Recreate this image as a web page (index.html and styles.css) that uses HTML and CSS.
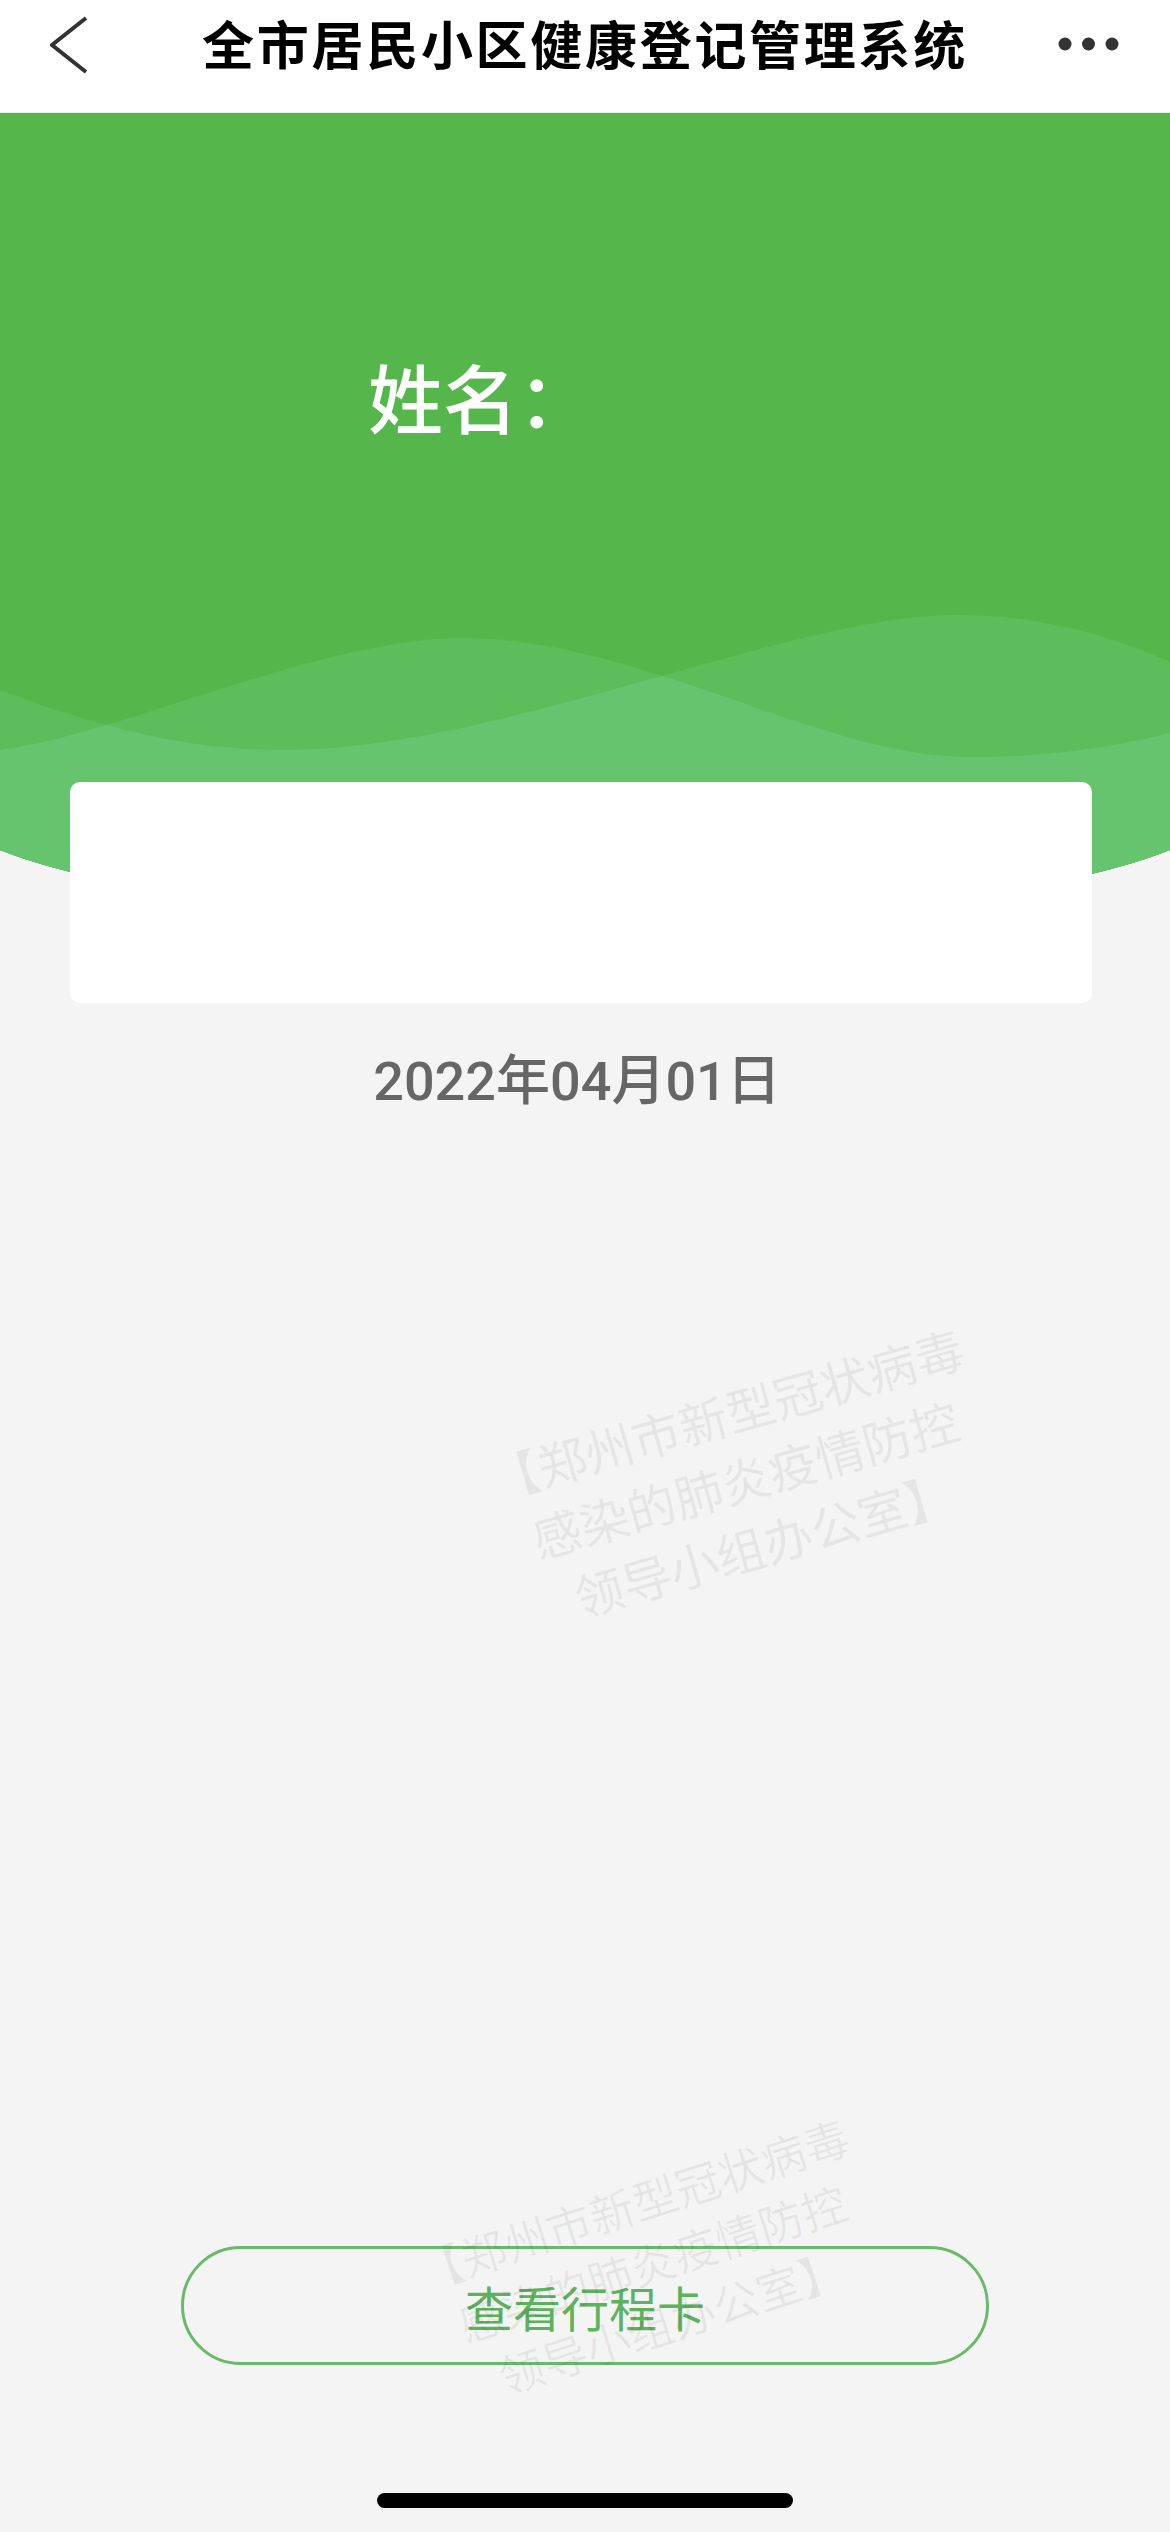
FILE: index.html
```html
<!DOCTYPE html>
<html lang="zh-CN">
<head>
<meta charset="utf-8">
<title>全市居民小区健康登记管理系统</title>
<link rel="stylesheet" href="styles.css">
</head>
<body>
<header class="topbar">
  <svg class="back" viewBox="0 0 40 60" width="40" height="60"><polyline points="36,3 2,30 36,57" fill="none" stroke="#333" stroke-width="4" stroke-linejoin="miter"/></svg>
  <h1 class="title">全市居民小区健康登记管理系统</h1>
  <svg class="more" viewBox="0 0 64 16" width="64" height="16"><circle cx="7" cy="8" r="6.5" fill="#333"/><circle cx="30.5" cy="8" r="6.5" fill="#333"/><circle cx="54" cy="8" r="6.5" fill="#333"/></svg>
</header>
<main class="hero">
  <svg class="waves" viewBox="0 113 1170 808" width="1170" height="808">
    <defs>
      <clipPath id="hero-clip"><path d="M0 113H1170V850A650 126 0 0 1 0 850Z"/></clipPath>
      <clipPath id="wave-a-clip"><path d="M0 690C120 735 200 750 284 750C500 750 790 615 955 615C1050 615 1120 640 1170 662V940H0Z"/></clipPath>
    </defs>
    <g clip-path="url(#hero-clip)">
      <rect x="0" y="113" width="1170" height="808" fill="#54b64b"/>
      <path d="M0 690C120 735 200 750 284 750C500 750 790 615 955 615C1050 615 1120 640 1170 662V940H0Z" fill="#5dbd5b"/>
      <path d="M0 750C120 735 320 638 463 638C640 638 820 757 970 757C1060 757 1120 745 1170 733V940H0Z" fill="#5dbd5b"/>
      <path d="M0 750C120 735 320 638 463 638C640 638 820 757 970 757C1060 757 1120 745 1170 733V940H0Z" fill="#67c46e" clip-path="url(#wave-a-clip)"/>
    </g>
  </svg>
  <div class="name">姓名：</div>
  <div class="card"></div>
  <div class="date">2022年04月01日</div>
</main>
<button class="trip">查看行程卡</button>
<div class="home-bar"></div>
<div class="watermark wm-1">【郑州市新型冠状病毒<br>感染的肺炎疫情防控<br>领导小组办公室】</div>
<div class="watermark wm-2">【郑州市新型冠状病毒<br>感染的肺炎疫情防控<br>领导小组办公室】</div>
</body>
</html>
```

FILE: styles.css
```css
html, body {
  margin: 0;
  padding: 0;
}
body {
  width: 1170px;
  height: 2532px;
  background: #f4f4f4;
  display: flex;
  flex-direction: column;
  position: relative;
  overflow: hidden;
  font-family: "Noto Sans CJK SC", "Noto Sans", sans-serif;
}
.topbar {
  box-sizing: border-box;
  height: 113px;
  padding-bottom: 27px;
  background: #fff;
  border-bottom: 1px solid #ededed;
  display: grid;
  grid-template-columns: 1fr auto 1fr;
  align-items: center;
  flex: none;
}
.back {
  margin-left: 50px;
  margin-top: 5px;
  display: block;
}
.title {
  margin: 0;
  font-size: 52px;
  line-height: 60px;
  font-weight: 700;
  letter-spacing: 2.7px;
  color: #000;
  white-space: nowrap;
}
.more {
  justify-self: end;
  margin-right: 48px;
  margin-top: 3px;
  display: block;
}
.hero {
  position: relative;
  display: flex;
  flex-direction: column;
  flex: none;
}
.waves {
  position: absolute;
  top: 0;
  left: 0;
  display: block;
}
.name {
  position: relative;
  padding-top: 243px;
  padding-left: 368px;
  font-size: 75px;
  line-height: 80px;
  font-weight: 500;
  color: #fff;
}
.card {
  position: relative;
  margin-top: 346px;
  margin-left: 70px;
  width: 1022px;
  height: 221px;
  background: #fff;
  border-radius: 10px;
}
.date {
  margin-top: 49px;
  padding-right: 16px;
  text-align: center;
  font-family: Roboto, "Noto Sans CJK SC", sans-serif;
  font-weight: 500;
  font-size: 54px;
  line-height: 60px;
  color: #666;
}
.trip {
  margin-top: auto;
  margin-left: 181px;
  width: 808px;
  height: 119px;
  box-sizing: border-box;
  border: 3px solid #6ab96b;
  border-radius: 60px;
  background: transparent;
  font-family: "Noto Sans CJK SC", sans-serif;
  font-size: 48px;
  color: #5cb25d;
  padding: 0;
  display: flex;
  align-items: center;
  justify-content: center;
  flex: none;
}
.home-bar {
  margin-top: 128px;
  margin-bottom: 24px;
  margin-left: 377px;
  width: 416px;
  height: 15px;
  border-radius: 8px;
  background: #000;
  flex: none;
}
.watermark {
  position: absolute;
  transform: translate(-50%, -50%) rotate(-16deg);
  font-size: 49px;
  line-height: 68px;
  color: rgba(0, 0, 0, 0.06);
  text-align: center;
  white-space: nowrap;
  pointer-events: none;
}
.wm-1 {
  left: 745px;
  top: 1478px;
}
.wm-2 {
  left: 652px;
  top: 2262px;
  font-size: 45px;
  line-height: 62px;
  transform: translate(-50%, -50%) rotate(-18deg);
}
```
